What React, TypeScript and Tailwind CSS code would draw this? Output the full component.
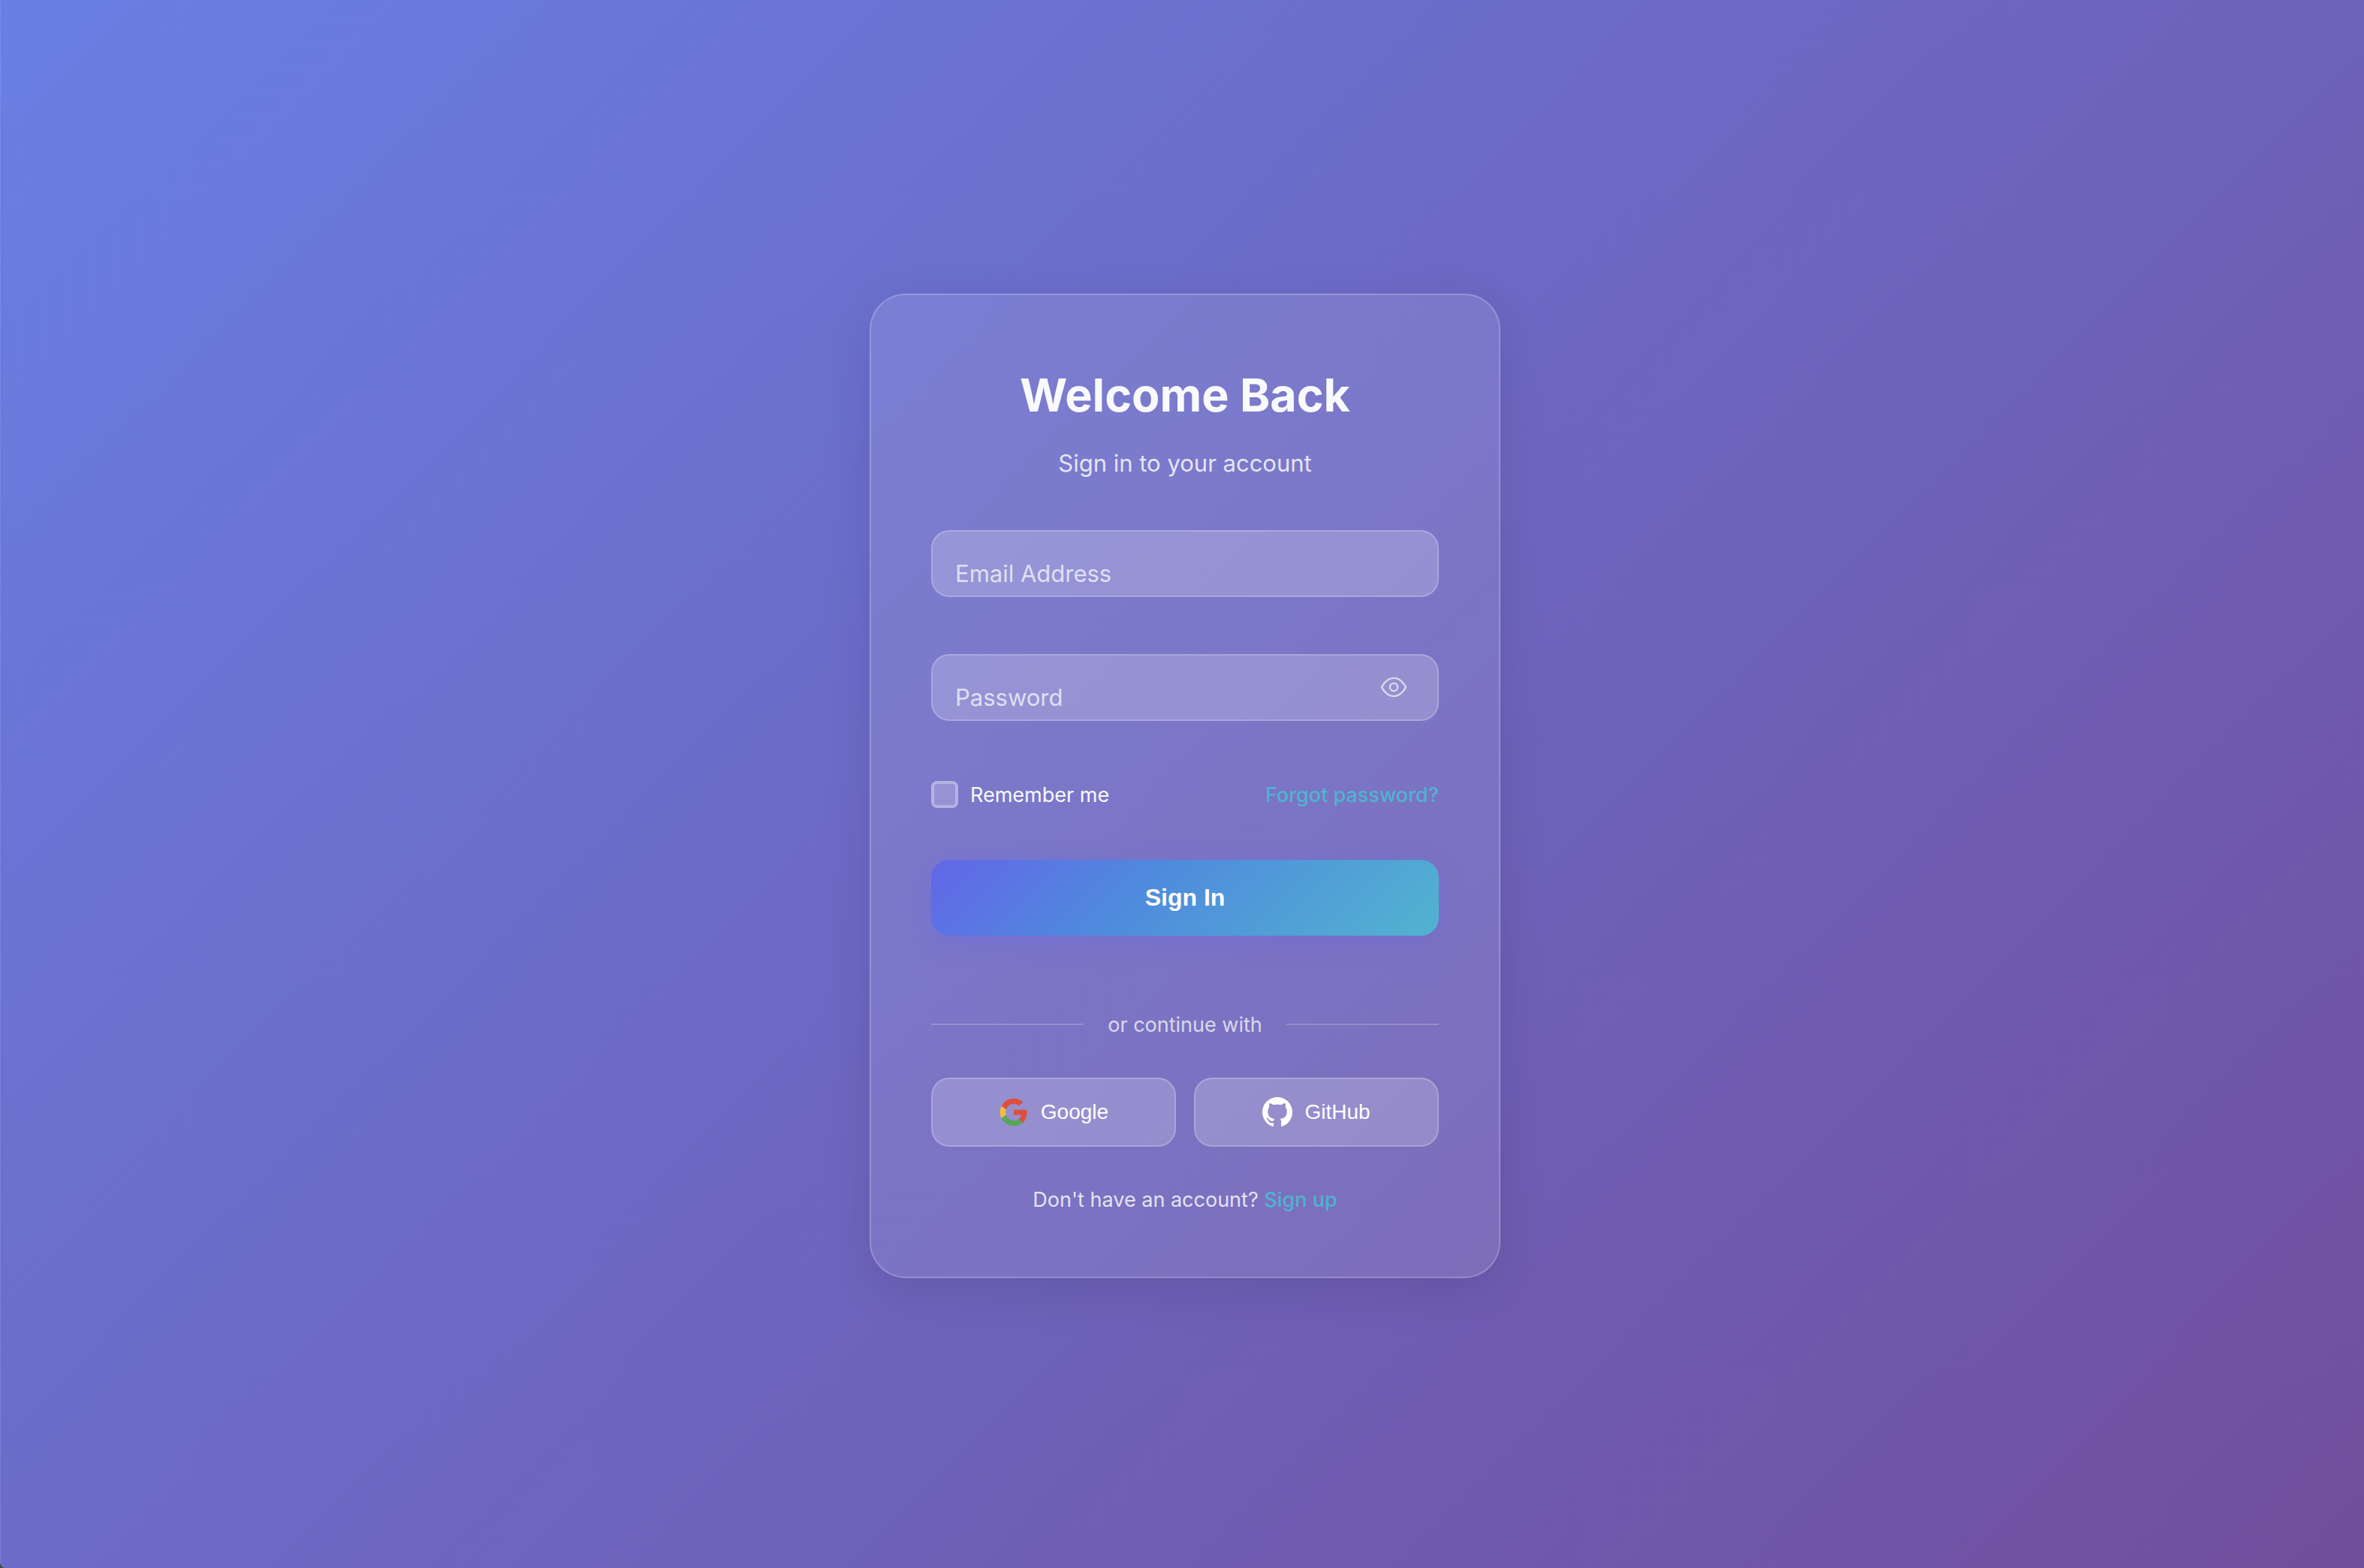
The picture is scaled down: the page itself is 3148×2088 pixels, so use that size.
import type { ReactNode } from "react";

function EyeIcon() {
  return (
    <svg viewBox="0 0 24 24" className="size-9" fill="none" stroke="currentColor" strokeWidth="1.6" aria-hidden="true">
      <path d="M1.3 12S5 3.9 12 3.9 22.7 12 22.7 12 19 20.1 12 20.1 1.3 12 1.3 12z" />
      <circle cx="12" cy="12" r="3.4" />
    </svg>
  );
}

function GoogleIcon() {
  return (
    <svg viewBox="0 0 24 24" className="size-10" aria-hidden="true">
      <path fill="#dc4f3f" d="M22.56 12.25c0-.78-.07-1.53-.2-2.25H12v4.26h5.92c-.26 1.37-1.04 2.53-2.21 3.31v2.77h3.57c2.08-1.92 3.28-4.74 3.28-8.09z" />
      <path fill="#58a65c" d="M12 23c2.97 0 5.46-.98 7.28-2.66l-3.57-2.77c-.98.66-2.23 1.06-3.71 1.06-2.86 0-5.29-1.93-6.16-4.53H2.18v2.84C3.99 20.53 7.7 23 12 23z" />
      <path fill="#f2be42" d="M5.84 14.09c-.22-.66-.35-1.36-.35-2.09s.13-1.43.35-2.09V7.07H2.18C1.43 8.55 1 10.22 1 12s.43 3.45 1.18 4.93l2.85-2.22.81-.62z" />
      <path fill="#dc4f3f" d="M12 5.38c1.62 0 3.06.56 4.21 1.64l3.15-3.15C17.45 2.09 14.97 1 12 1 7.7 1 3.99 3.47 2.18 7.07l3.66 2.84c.87-2.6 3.3-4.53 6.16-4.53z" />
    </svg>
  );
}

function GitHubIcon() {
  return (
    <svg viewBox="0 0 24 24" className="size-10" fill="currentColor" aria-hidden="true">
      <path d="M12 0c-6.626 0-12 5.373-12 12 0 5.302 3.438 9.8 8.207 11.387.599.111.793-.261.793-.577v-2.234c-3.338.726-4.033-1.416-4.033-1.416-.546-1.387-1.333-1.756-1.333-1.756-1.089-.745.083-.729.083-.729 1.205.084 1.839 1.237 1.839 1.237 1.07 1.834 2.807 1.304 3.492.997.107-.775.418-1.305.762-1.604-2.665-.305-5.467-1.334-5.467-5.931 0-1.311.469-2.381 1.236-3.221-.124-.303-.535-1.524.117-3.176 0 0 1.008-.322 3.301 1.23.957-.266 1.983-.399 3.003-.404 1.02.005 2.047.138 3.006.404 2.291-1.552 3.297-1.23 3.297-1.23.653 1.653.242 2.874.118 3.176.77.84 1.235 1.911 1.235 3.221 0 4.609-2.807 5.624-5.479 5.921.43.372.823 1.102.823 2.222v3.293c0 .319.192.694.801.576 4.765-1.589 8.199-6.086 8.199-11.386 0-6.627-5.373-12-12-12z" />
    </svg>
  );
}

function Field({ id, type, label, children }: { id: string; type: string; label: string; children?: ReactNode }) {
  return (
    <div className="relative">
      <input
        id={id}
        type={type}
        className="block h-[89px] w-full rounded-3xl border-2 border-white/20 bg-white/20 px-8 text-[31px] text-white outline-none"
      />
      <label htmlFor={id} className="pointer-events-none absolute top-9 left-8 text-[31px] leading-[43px] text-[#f8fafc]/75">
        {label}
      </label>
      {children}
    </div>
  );
}

function SocialButton({ icon, children }: { icon: ReactNode; children: ReactNode }) {
  return (
    <button
      type="button"
      className="flex h-[92px] items-center justify-center gap-4 rounded-3xl border-2 border-white/20 bg-white/20 font-['Liberation_Sans',Arial,sans-serif] text-[28px] leading-8 text-white"
    >
      {icon}
      <span>{children}</span>
    </button>
  );
}

export default function App() {
  return (
    <div className="bg-[#45464a]">
      <main className="flex min-h-screen items-center justify-center rounded-bl-lg border-l border-white/10 bg-[linear-gradient(135deg,#697fe4_0%,#714e9d_100%)] bg-origin-border pt-1 pl-[7px] font-['Inter',sans-serif] text-[#f8fafc]">
        <section className="w-full max-w-[840px] rounded-[48px] border-2 border-white/20 bg-white/10 px-[78px] pt-[88px] pb-20 shadow-[0_16px_64px_rgba(0,0,0,0.1)]">
          <header className="text-center">
            <h1 className="text-[61px] leading-[90px] font-bold">Welcome Back</h1>
            <p className="mt-5 text-[31px] leading-[51px] text-[#f8fafc]/85">Sign in to your account</p>
          </header>

          <form className="mt-16 px-0.5" onSubmit={(e) => e.preventDefault()}>
            <div className="flex flex-col gap-[76px]">
              <Field id="email" type="email" label="Email Address" />
              <Field id="password" type="password" label="Password">
                <button
                  type="button"
                  aria-label="Show password"
                  className="absolute inset-y-0 right-[42px] flex items-center text-[#f8fafc]/70"
                >
                  <EyeIcon />
                </button>
              </Field>
            </div>

            <div className="mt-[76px] flex h-[45px] items-center justify-between text-[27px] leading-[45px]">
              <label className="flex items-center gap-4">
                <input
                  type="checkbox"
                  className="size-9 appearance-none rounded-lg border-4 border-white/30 bg-white/20"
                />
                <span>Remember me</span>
              </label>
              <a href="#forgot" className="font-medium text-[#4fb3d0]">
                Forgot password?
              </a>
            </div>

            <button
              type="submit"
              className="mt-16 block h-[101px] w-full rounded-3xl bg-[linear-gradient(135deg,#6366e8_0%,#4f8add_40%,#52b3d0_100%)] font-['Liberation_Sans',Arial,sans-serif] text-[32px] leading-9 font-bold text-white shadow-[0_8px_32px_rgba(99,102,241,0.3)]"
            >
              Sign In
            </button>
          </form>

          <div className="mt-24 flex items-center gap-8 px-0.5 text-[27px] leading-[45px] text-[#f8fafc]/75">
            <span className="h-0.5 flex-1 bg-white/20" />
            <span>or continue with</span>
            <span className="h-0.5 flex-1 bg-white/20" />
          </div>

          <div className="mt-12 grid grid-cols-2 gap-6 px-0.5">
            <SocialButton icon={<GoogleIcon />}>Google</SocialButton>
            <SocialButton icon={<GitHubIcon />}>GitHub</SocialButton>
          </div>

          <p className="mt-12 text-center text-[27px] leading-[45px] text-[#f8fafc]/85">
            Don't have an account?{" "}
            <a href="#signup" className="font-medium text-[#4fb3d0]">
              Sign up
            </a>
          </p>
        </section>
      </main>
    </div>
  );
}
